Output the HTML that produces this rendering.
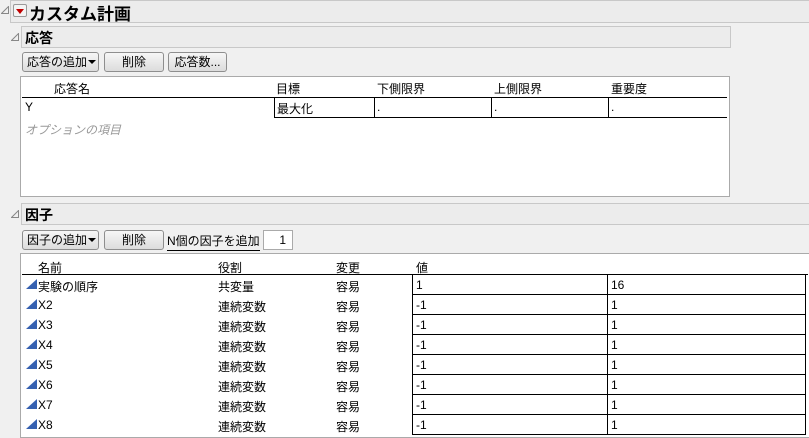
<!DOCTYPE html>
<html><head><meta charset="utf-8"><style>
*{margin:0;padding:0;box-sizing:border-box}
body{width:809px;height:438px;background:#f0f0f0;position:relative;overflow:hidden;font-family:"Liberation Sans","Noto Sans CJK JP",sans-serif;font-size:12px;color:#000}
.a{position:absolute;white-space:nowrap}
.hdr{position:absolute;background:#ececec;border:1px solid #c8c8c8}
.btn{position:absolute;height:20px;border:1px solid #8e8e8e;border-radius:3px;background:linear-gradient(#f6f6f6,#dcdcdc);text-align:center;line-height:18px;font-size:12px}
.tri{position:absolute;width:0;height:0;border-left:4px solid transparent;border-right:4px solid transparent;border-top:4px solid #000}
.gt{position:absolute;width:8px;height:8px}
.hl{position:absolute;height:1px;background:#000}
.vl{position:absolute;width:1px;background:#000}
.ic{position:absolute;width:0;height:0;border-left:11px solid transparent;border-bottom:10px solid #3560b0}
</style></head><body>
<svg class="gt" style="left:1px;top:6px" viewBox="0 0 8 8"><path d="M7.5 0.5V7.5H0.5Z" fill="none" stroke="#888"/></svg>
<div class="hdr" style="left:10px;top:0;width:800px;height:23px"></div>
<div class="a" style="left:13px;top:4px;width:14px;height:13px;border:1px solid #999;border-radius:2px;background:#f4f4f4"></div>
<div class="a" style="left:16px;top:9px;border-left:4px solid transparent;border-right:4px solid transparent;border-top:5px solid #c00000;width:0;height:0"></div>
<div class="a" style="left:29px;top:0px;font-size:17px;font-weight:bold">カスタム計画</div>

<svg class="gt" style="left:11px;top:33px" viewBox="0 0 8 8"><path d="M7.5 0.5V7.5H0.5Z" fill="none" stroke="#888"/></svg>
<div class="hdr" style="left:21px;top:26px;width:710px;height:22px"></div>
<div class="a" style="left:25px;top:28px;font-size:14px;font-weight:bold">応答</div>

<div class="btn" style="left:22px;top:52px;width:77px;text-align:left;padding-left:4px">応答の追加</div>
<div class="tri" style="left:88px;top:60px"></div>
<div class="btn" style="left:104px;top:52px;width:60px">削除</div>
<div class="btn" style="left:168px;top:52px;width:59px">応答数...</div>

<div class="a" style="left:20px;top:76px;width:710px;height:121px;background:#fff;border:1px solid #aaa"></div>
<div class="a" style="left:54px;top:80px">応答名</div>
<div class="a" style="left:276px;top:80px">目標</div>
<div class="a" style="left:377px;top:80px">下側限界</div>
<div class="a" style="left:494px;top:80px">上側限界</div>
<div class="a" style="left:611px;top:80px">重要度</div>
<div class="hl" style="left:22px;top:97px;width:705px"></div>
<div class="hl" style="left:274px;top:117px;width:453px"></div>
<div class="vl" style="left:274px;top:97px;height:20px"></div>
<div class="vl" style="left:374px;top:97px;height:20px"></div>
<div class="vl" style="left:491px;top:97px;height:20px"></div>
<div class="vl" style="left:608px;top:97px;height:20px"></div>
<div class="a" style="left:25px;top:100px">Y</div>
<div class="a" style="left:277px;top:100px">最大化</div>
<div class="a" style="left:377px;top:100px">.</div>
<div class="a" style="left:494px;top:100px">.</div>
<div class="a" style="left:611px;top:100px">.</div>
<div class="a" style="left:25px;top:121px;color:#999;font-style:italic">オプションの項目</div>

<svg class="gt" style="left:11px;top:210px" viewBox="0 0 8 8"><path d="M7.5 0.5V7.5H0.5Z" fill="none" stroke="#888"/></svg>
<div class="hdr" style="left:21px;top:203px;width:790px;height:22px"></div>
<div class="a" style="left:25px;top:205px;font-size:14px;font-weight:bold">因子</div>

<div class="btn" style="left:22px;top:230px;width:77px;text-align:left;padding-left:4px">因子の追加</div>
<div class="tri" style="left:88px;top:238px"></div>
<div class="btn" style="left:104px;top:230px;width:60px">削除</div>
<div class="a" style="left:167px;top:232px;border-bottom:1px solid #000;padding-bottom:1px">N個の因子を追加</div>
<div class="a" style="left:263px;top:230px;width:30px;height:20px;background:#fff;border:1px solid #aaa;text-align:right;padding-right:6px;line-height:18px">1</div>

<div class="a" style="left:20px;top:253px;width:790px;height:185px;background:#fff;border:1px solid #aaa"></div>
<div class="a" style="left:38px;top:259px">名前</div>
<div class="a" style="left:218px;top:259px">役割</div>
<div class="a" style="left:336px;top:259px">変更</div>
<div class="a" style="left:416px;top:259px">値</div>
<div class="hl" style="left:22px;top:274px;width:786px"></div>
<div class="vl" style="left:412px;top:274px;height:161px"></div>
<div class="vl" style="left:607px;top:274px;height:161px"></div>
<div class="vl" style="left:805px;top:274px;height:161px"></div>

<div class="hl" style="left:412px;top:294px;width:394px"></div>
<div class="hl" style="left:412px;top:314px;width:394px"></div>
<div class="hl" style="left:412px;top:334px;width:394px"></div>
<div class="hl" style="left:412px;top:354px;width:394px"></div>
<div class="hl" style="left:412px;top:374px;width:394px"></div>
<div class="hl" style="left:412px;top:394px;width:394px"></div>
<div class="hl" style="left:412px;top:414px;width:394px"></div>
<div class="hl" style="left:412px;top:434px;width:394px"></div>

<div class="ic" style="left:26px;top:279px"></div><div class="a" style="left:38px;top:278px">実験の順序</div><div class="a" style="left:218px;top:278px">共変量</div><div class="a" style="left:336px;top:278px">容易</div><div class="a" style="left:416px;top:278px">1</div><div class="a" style="left:611px;top:278px">16</div>
<div class="ic" style="left:26px;top:299px"></div><div class="a" style="left:38px;top:298px">X2</div><div class="a" style="left:218px;top:298px">連続変数</div><div class="a" style="left:336px;top:298px">容易</div><div class="a" style="left:416px;top:298px">-1</div><div class="a" style="left:611px;top:298px">1</div>
<div class="ic" style="left:26px;top:319px"></div><div class="a" style="left:38px;top:318px">X3</div><div class="a" style="left:218px;top:318px">連続変数</div><div class="a" style="left:336px;top:318px">容易</div><div class="a" style="left:416px;top:318px">-1</div><div class="a" style="left:611px;top:318px">1</div>
<div class="ic" style="left:26px;top:339px"></div><div class="a" style="left:38px;top:338px">X4</div><div class="a" style="left:218px;top:338px">連続変数</div><div class="a" style="left:336px;top:338px">容易</div><div class="a" style="left:416px;top:338px">-1</div><div class="a" style="left:611px;top:338px">1</div>
<div class="ic" style="left:26px;top:359px"></div><div class="a" style="left:38px;top:358px">X5</div><div class="a" style="left:218px;top:358px">連続変数</div><div class="a" style="left:336px;top:358px">容易</div><div class="a" style="left:416px;top:358px">-1</div><div class="a" style="left:611px;top:358px">1</div>
<div class="ic" style="left:26px;top:379px"></div><div class="a" style="left:38px;top:378px">X6</div><div class="a" style="left:218px;top:378px">連続変数</div><div class="a" style="left:336px;top:378px">容易</div><div class="a" style="left:416px;top:378px">-1</div><div class="a" style="left:611px;top:378px">1</div>
<div class="ic" style="left:26px;top:399px"></div><div class="a" style="left:38px;top:398px">X7</div><div class="a" style="left:218px;top:398px">連続変数</div><div class="a" style="left:336px;top:398px">容易</div><div class="a" style="left:416px;top:398px">-1</div><div class="a" style="left:611px;top:398px">1</div>
<div class="ic" style="left:26px;top:419px"></div><div class="a" style="left:38px;top:418px">X8</div><div class="a" style="left:218px;top:418px">連続変数</div><div class="a" style="left:336px;top:418px">容易</div><div class="a" style="left:416px;top:418px">-1</div><div class="a" style="left:611px;top:418px">1</div>
</body></html>
